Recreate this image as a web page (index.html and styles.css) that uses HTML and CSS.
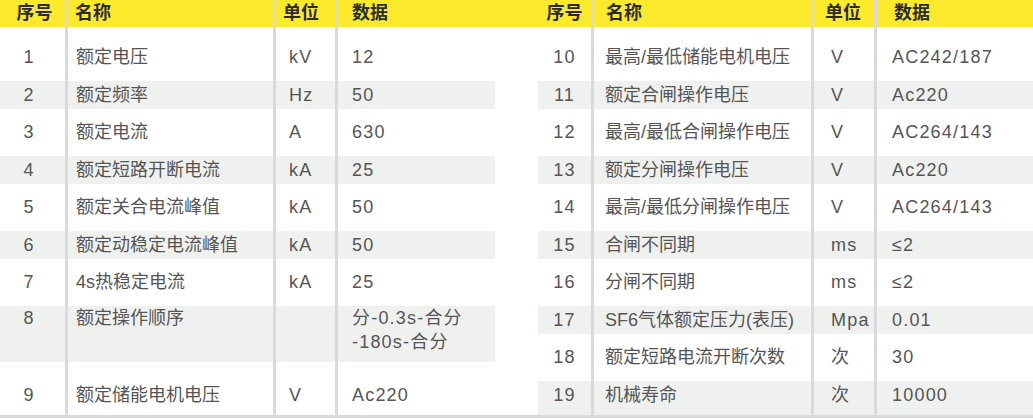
FILE: index.html
```html
<!DOCTYPE html>
<html lang="zh-CN">
<head>
<meta charset="utf-8">
<title>技术参数</title>
<link rel="stylesheet" href="styles.css">
</head>
<body>
<div class="sheet">
  <div class="tbl tbl-l">
    <div class="row head"><div class="c num">序号</div><div class="c name">名称</div><div class="c unit">单位</div><div class="c val">数据</div></div>
    <div class="row first"><div class="c num">1</div><div class="c name">额定电压</div><div class="c unit">kV</div><div class="c val">12</div></div>
    <div class="row alt"><div class="c num">2</div><div class="c name">额定频率</div><div class="c unit">Hz</div><div class="c val">50</div></div>
    <div class="row"><div class="c num">3</div><div class="c name">额定电流</div><div class="c unit">A</div><div class="c val">630</div></div>
    <div class="row alt"><div class="c num">4</div><div class="c name">额定短路开断电流</div><div class="c unit">kA</div><div class="c val">25</div></div>
    <div class="row"><div class="c num">5</div><div class="c name">额定关合电流峰值</div><div class="c unit">kA</div><div class="c val">50</div></div>
    <div class="row alt"><div class="c num">6</div><div class="c name">额定动稳定电流峰值</div><div class="c unit">kA</div><div class="c val">50</div></div>
    <div class="row"><div class="c num">7</div><div class="c name">4s热稳定电流</div><div class="c unit">kA</div><div class="c val">25</div></div>
    <div class="row alt tall"><div class="c num">8</div><div class="c name">额定操作顺序</div><div class="c unit"></div><div class="c val">分-0.3s-合分<br>-180s-合分</div></div>
    <div class="row last"><div class="c num">9</div><div class="c name">额定储能电机电压</div><div class="c unit">V</div><div class="c val">Ac220</div></div>
  </div>
  <div class="tbl tbl-r">
    <div class="row head"><div class="c num">序号</div><div class="c name">名称</div><div class="c unit">单位</div><div class="c val">数据</div></div>
    <div class="row first"><div class="c num">10</div><div class="c name">最高/最低储能电机电压</div><div class="c unit">V</div><div class="c val">AC242/187</div></div>
    <div class="row alt"><div class="c num">11</div><div class="c name">额定合闸操作电压</div><div class="c unit">V</div><div class="c val">Ac220</div></div>
    <div class="row"><div class="c num">12</div><div class="c name">最高/最低合闸操作电压</div><div class="c unit">V</div><div class="c val">AC264/143</div></div>
    <div class="row alt"><div class="c num">13</div><div class="c name">额定分闸操作电压</div><div class="c unit">V</div><div class="c val">Ac220</div></div>
    <div class="row"><div class="c num">14</div><div class="c name">最高/最低分闸操作电压</div><div class="c unit">V</div><div class="c val">AC264/143</div></div>
    <div class="row alt"><div class="c num">15</div><div class="c name">合闸不同期</div><div class="c unit">ms</div><div class="c val">≤2</div></div>
    <div class="row"><div class="c num">16</div><div class="c name">分闸不同期</div><div class="c unit">ms</div><div class="c val">≤2</div></div>
    <div class="row alt"><div class="c num">17</div><div class="c name">SF6气体额定压力(表压)</div><div class="c unit">Mpa</div><div class="c val">0.01</div></div>
    <div class="row"><div class="c num">18</div><div class="c name">额定短路电流开断次数</div><div class="c unit">次</div><div class="c val">30</div></div>
    <div class="row alt last"><div class="c num">19</div><div class="c name">机械寿命</div><div class="c unit">次</div><div class="c val">10000</div></div>
  </div>
</div>
</body>
</html>
```

FILE: styles.css
```css
* { box-sizing: border-box; }

html, body {
  margin: 0;
  padding: 0;
  background: #ffffff;
}

body {
  font-family: "Liberation Sans", "Noto Sans CJK SC", sans-serif;
  font-size: 18px;
  color: #555555;
}

.sheet {
  width: 1033px;
  display: flex;
  gap: 43px;
  background: linear-gradient(to bottom, #fdea2c 0, #fdea2c 27px, #ffffff 27px);
  border-bottom: 3px solid #dadada;
}

.tbl {
  width: 495px;
  display: flex;
  flex-direction: column;
}

.row {
  display: grid;
  height: 37.5px;
  line-height: 28px;
}

.tbl-l .row { grid-template-columns: 65px 208px 62px 160px; }
.tbl-r .row { grid-template-columns: 53px 220px 63px 159px; }

.c {
  padding-top: 4.75px;
  white-space: nowrap;
}

.c + .c { border-left: 3px solid #dadada; }

.num, .unit, .val { letter-spacing: 1.2px; }
.name { letter-spacing: 0; }

/* header */
.row.head {
  height: 27px;
  line-height: 26px;
  font-weight: 700;
  color: #2b2b2b;
  letter-spacing: 0;
}
.row.head .c { padding-top: 0; letter-spacing: 0; }

/* first body row carries the space below the header */
.row.first { height: 48.75px; }
.row.first .c { padding-top: 16px; }

/* striped rows: band of 28px inside a 37.5px row */
.row.alt {
  background: linear-gradient(to bottom,
    transparent 4.75px, #eff1ef 4.75px,
    #eff1ef 32.75px, transparent 32.75px);
}

.row.tall {
  height: 75px;
  line-height: 24px;
  background: linear-gradient(to bottom,
    transparent 4.75px, #eff1ef 4.75px,
    #eff1ef 61.5px, transparent 61.5px);
}
.row.tall .c { padding-top: 5px; }

.row.last { height: 39.5px; }
.row.alt.last {
  background: linear-gradient(to bottom, transparent 4.75px, #eff1ef 4.75px);
}

/* left table column alignment */
.tbl-l .num { text-align: center; padding-right: 7px; }
.tbl-l .head .num { padding-right: 0; padding-left: 4px; }
.tbl-l .name { padding-left: 8px; }
.tbl-l .head .name { padding-left: 7px; }
.tbl-l .unit { padding-left: 13px; }
.tbl-l .head .unit { padding-left: 7px; }
.tbl-l .val { padding-left: 14px; }
.tbl-l .head .val { padding-left: 14px; }

/* right table column alignment */
.tbl-r .num { text-align: center; }
.tbl-r .name { padding-left: 11px; }
.tbl-r .head .name { padding-left: 12px; }
.tbl-r .unit { padding-left: 17px; }
.tbl-r .head .unit { padding-left: 11px; }
.tbl-r .val { padding-left: 15px; }
.tbl-r .head .val { padding-left: 17px; }
```
